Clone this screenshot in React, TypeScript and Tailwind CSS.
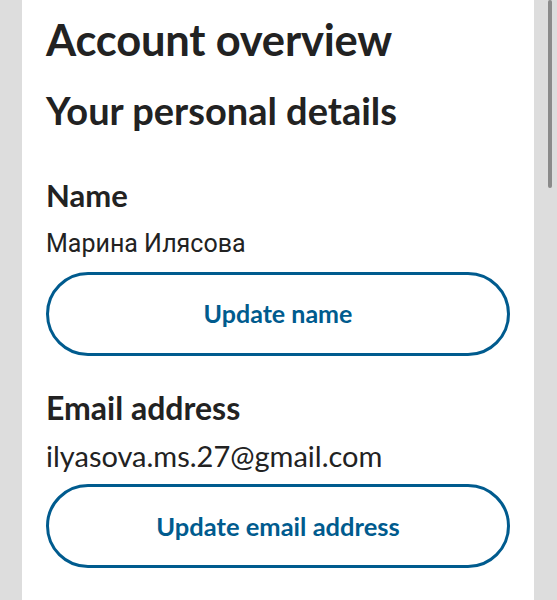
export default function App() {
  return (
    <div className="relative min-h-screen bg-[#dddddd] font-['Lato','Roboto',sans-serif] text-[#222222]">
      {/* page scrollbar */}
      <div className="absolute right-[5px] top-0 w-[4px] h-[188px] rounded-full bg-[#8a8a8a]" />

      <div className="ml-[22px] w-[512px] min-h-screen bg-white px-[24px] pt-[13px]">
        <h1 className="text-[43.5px] font-bold leading-[52px] tracking-[-0.2px]">Account overview</h1>
        <h2 className="mt-[22px] text-[38px] font-bold leading-[46px]">Your personal details</h2>

        {/* Name */}
        <section className="mt-[43px]">
          <h3 className="text-[31px] font-bold leading-[38px]">Name</h3>
          <p className="mt-[15px] text-[25px] leading-[30px] font-['Roboto',sans-serif]">Марина Илясова</p>
          <button className="mt-[13px] w-full h-[84px] rounded-full border-[3px] border-[#005b8e] text-[#005b8e] text-[25px] font-bold">
            Update name
          </button>
        </section>

        {/* Email */}
        <section className="mt-[33px]">
          <h3 className="text-[32px] font-bold leading-[38px]">Email address</h3>
          <p className="mt-[12px] text-[29px] leading-[34px]">ilyasova.ms.27@gmail.com</p>
          <button className="mt-[11px] w-full h-[84px] rounded-full border-[3px] border-[#005b8e] text-[#005b8e] text-[25.5px] font-bold">
            Update email address
          </button>
        </section>
      </div>
    </div>
  );
}
